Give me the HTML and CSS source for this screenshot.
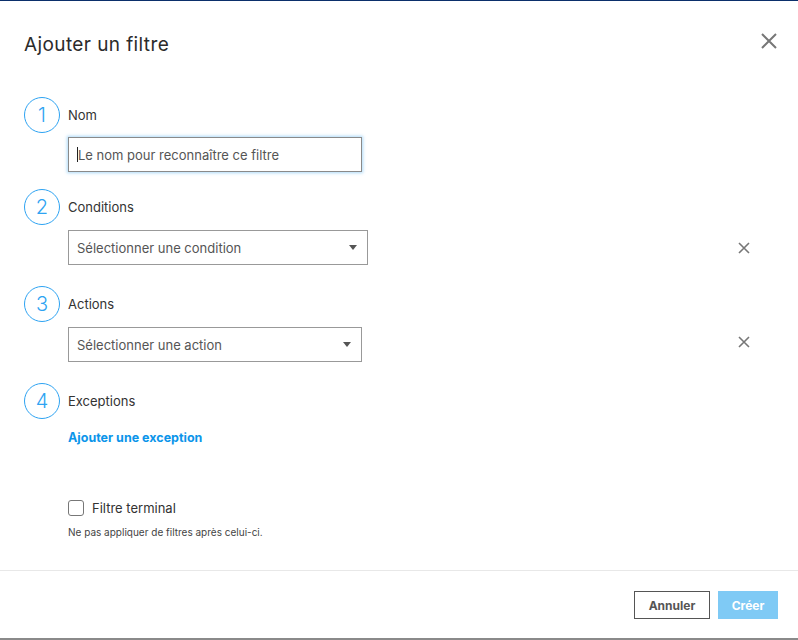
FILE: index.html
```html
<!DOCTYPE html>
<html lang="fr">
<head>
<meta charset="utf-8">
<title>Ajouter un filtre</title>
<link rel="stylesheet" href="styles.css">
</head>
<body>
<div class="page">
  <div class="modal">
    <header class="modal-header">
      <h1 class="modal-title">Ajouter un filtre</h1>
      <button class="close-btn" aria-label="Fermer">
        <svg width="16" height="16" viewBox="0 0 16 16"><path d="M1 1L15 15M15 1L1 15" stroke="#777" stroke-width="2" fill="none"/></svg>
      </button>
    </header>

    <div class="modal-body">
      <section class="step step-1">
        <div class="step-head">
          <span class="step-num">1</span>
          <span class="step-label">Nom</span>
        </div>
        <div class="step-content">
          <div class="text-input focused"><span class="caret"></span><span class="placeholder">Le nom pour reconnaître ce filtre</span></div>
        </div>
      </section>

      <section class="step step-2">
        <div class="step-head">
          <span class="step-num">2</span>
          <span class="step-label">Conditions</span>
        </div>
        <div class="step-content row">
          <div class="select wide"><span>Sélectionner une condition</span><span class="arrow"></span></div>
          <button class="remove-btn" aria-label="Supprimer">
            <svg width="12" height="12" viewBox="0 0 12 12"><path d="M1 1L11 11M11 1L1 11" stroke="#777" stroke-width="1.6" fill="none"/></svg>
          </button>
        </div>
      </section>

      <section class="step step-3">
        <div class="step-head">
          <span class="step-num">3</span>
          <span class="step-label">Actions</span>
        </div>
        <div class="step-content row">
          <div class="select"><span>Sélectionner une action</span><span class="arrow"></span></div>
          <button class="remove-btn raised" aria-label="Supprimer">
            <svg width="12" height="12" viewBox="0 0 12 12"><path d="M1 1L11 11M11 1L1 11" stroke="#777" stroke-width="1.6" fill="none"/></svg>
          </button>
        </div>
      </section>

      <section class="step step-4">
        <div class="step-head">
          <span class="step-num">4</span>
          <span class="step-label">Exceptions</span>
        </div>
        <div class="step-content">
          <a class="link" href="#">Ajouter une exception</a>
        </div>
      </section>

      <div class="terminal">
        <label class="check-row"><span class="checkbox"></span><span class="check-label">Filtre terminal</span></label>
        <p class="hint">Ne pas appliquer de filtres après celui-ci.</p>
      </div>
    </div>

    <footer class="modal-footer">
      <button class="btn btn-secondary">Annuler</button>
      <button class="btn btn-primary">Créer</button>
    </footer>
  </div>
  <div class="backdrop-edge"></div>
</div>
</body>
</html>
```

FILE: styles.css
```css
* { box-sizing: border-box; }
html, body { margin: 0; padding: 0; background: #fff; }
body {
  font-family: "Inter", "DejaVu Sans", sans-serif;
  color: #333;
  width: 798px;
  height: 640px;
  overflow: hidden;
}
.page {
  height: 640px;
  display: flex;
  flex-direction: column;
  border-top: 1px solid #0b2f6b;
}
.modal {
  flex: 1;
  display: flex;
  flex-direction: column;
}
.modal-header {
  display: flex;
  justify-content: space-between;
  align-items: flex-start;
  padding: 32px 21px 0 24px;
}
.modal-title {
  margin: 0;
  font-size: 19px;
  letter-spacing: 0.4px;
  line-height: 24px;
  font-weight: 400;
  color: #2b2b2b;
}
.close-btn {
  border: 0;
  background: none;
  padding: 0;
  width: 16px;
  height: 16px;
  display: flex;
}
.modal-body {
  padding: 40px 48px 0 24px;
  flex: 1;
}
.step-head {
  display: flex;
  align-items: center;
  gap: 8px;
  height: 36px;
}
.step-num {
  width: 36px;
  height: 36px;
  border: 1px solid #2ea3f2;
  border-radius: 50%;
  display: flex;
  align-items: center;
  justify-content: center;
  font-size: 20px;
  font-weight: 300;
  color: #2ea3f2;
}
.step-label {
  font-size: 13px;
  color: #333;
}
.step-content {
  margin-left: 44px;
  margin-top: 4px;
}
.row {
  display: flex;
  justify-content: space-between;
  align-items: center;
  margin-top: 5px;
}
.step-1 { margin-bottom: 17px; }
.step-2, .step-3 { margin-bottom: 21px; }
.text-input {
  width: 294px;
  height: 35px;
  border: 1px solid #8a8a8a;
  box-shadow: 0 0 3px 1px rgba(74, 170, 240, 0.45);
  display: flex;
  align-items: center;
  padding-left: 8px;
  font-size: 13px;
}
.caret {
  width: 1px;
  height: 15px;
  background: #222;
}
.placeholder { color: #555; }
.select {
  width: 294px;
  height: 35px;
  border: 1px solid #999;
  display: flex;
  align-items: center;
  justify-content: space-between;
  padding: 0 10px 0 8px;
  font-size: 13px;
  color: #555;
}
.select.wide { width: 300px; }
.arrow {
  width: 0;
  height: 0;
  border-left: 4px solid transparent;
  border-right: 4px solid transparent;
  border-top: 5px solid #555;
}
.remove-btn {
  border: 0;
  background: none;
  padding: 0;
  width: 12px;
  height: 12px;
  display: flex;
}
.remove-btn.raised { margin-bottom: 5px; }
.step-4 .step-content { margin-top: 7px; }
.link {
  font-size: 12.5px;
  font-weight: 700;
  color: #0b95ea;
  text-decoration: none;
  line-height: 16px;
}
.terminal {
  margin-left: 44px;
  margin-top: 54px;
}
.check-row {
  display: flex;
  align-items: center;
  gap: 8px;
  height: 16px;
}
.checkbox {
  width: 16px;
  height: 16px;
  border: 1px solid #777;
  border-radius: 3px;
}
.check-label { font-size: 13px; color: #333; }
.hint {
  margin: 9px 0 0;
  font-size: 10px;
  color: #444;
  line-height: 14px;
}
.modal-footer {
  border-top: 1px solid #e8e8e8;
  display: flex;
  justify-content: flex-end;
  gap: 8px;
  padding: 20px 20px 0 0;
  height: 68px;
}
.btn {
  height: 28px;
  font-family: inherit;
  font-size: 12px;
  font-weight: 700;
  padding: 0 12px;
}
.btn-secondary {
  border: 1px solid #555;
  background: #fff;
  color: #555;
  width: 76px;
}
.btn-primary {
  border: 0;
  background: #7fcaf5;
  color: #fff;
  width: 60px;
}
.backdrop-edge {
  height: 2px;
  background: #8a8a8a;
}
```
